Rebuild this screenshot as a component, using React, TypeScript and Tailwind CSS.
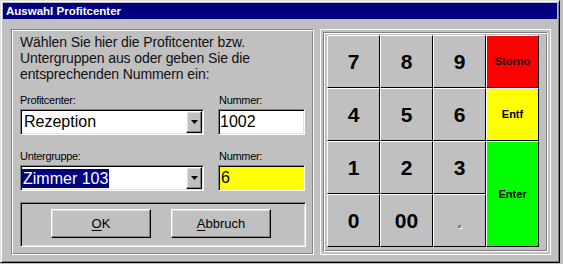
import React from "react";

const raisedKey =
  "border border-t-white border-l-white border-r-black border-b-black";
const sunken =
  "border border-t-[#808080] border-l-[#808080] border-b-white border-r-white shadow-[inset_1px_1px_0_#000000,inset_-1px_-1px_0_#dfdfdf]";
const etched =
  "border border-t-[#808080] border-l-[#808080] border-b-white border-r-white shadow-[inset_1px_1px_0_#ffffff,inset_-1px_-1px_0_#808080]";
const winButton =
  "border border-t-white border-l-white border-r-black border-b-black shadow-[inset_-1px_-1px_0_#808080,inset_1px_1px_0_#dfdfdf]";

function DropButton() {
  return (
    <div className={`w-[16px] h-full bg-[#c0c0c0] flex items-center justify-center ${winButton}`}>
      <svg width="7" height="4" viewBox="0 0 7 4">
        <polygon points="0,0 7,0 3.5,4" fill="#000" />
      </svg>
    </div>
  );
}

function Key({
  children,
  className = "",
  small = false,
}: {
  children?: React.ReactNode;
  className?: string;
  small?: boolean;
}) {
  return (
    <div
      className={`flex items-center justify-center font-bold ${small ? "text-[11px]" : "text-[21px]"} ${raisedKey} ${className}`}
    >
      {children}
    </div>
  );
}

export default function App() {
  return (
    <div className="w-[563px] h-[264px] bg-[#c0c0c0] font-['Liberation_Sans',Arial,sans-serif] text-black overflow-hidden">
      <div className="w-[560px] h-[263px] border border-t-[#dfdfdf] border-l-[#dfdfdf] border-r-black border-b-black shadow-[inset_1px_1px_0_#ffffff,inset_-1px_-1px_0_#808080] p-[2px] flex flex-col">
        <div className="h-[16px] bg-[#000080] text-white font-bold text-[11.5px] leading-[16px] pl-[3px] shrink-0">
          Auswahl Profitcenter
        </div>
        <div className="flex mt-[10px] ml-[8px] gap-[6px]">
          {/* Left panel */}
          <div className={`w-[303px] h-[226px] ${etched} pl-[8px] pt-[4px]`}>
            <p className="text-[14px] leading-[16px] tracking-[-0.1px] text-[#111]">
              Wählen Sie hier die Profitcenter bzw.
              <br />
              Untergruppen aus oder geben Sie die
              <br />
              entsprechenden Nummern ein:
            </p>

            <div className="flex mt-[11px]">
              <div className="w-[184px]">
                <div className="h-[14px] text-[11px] leading-[14px] tracking-[-0.3px]">Profitcenter:</div>
                <div className={`mt-[2px] h-[26px] bg-white flex items-stretch p-[1px] ${sunken}`}>
                  <div className="flex-1 flex items-center pl-[2px] text-[16px] leading-[20px]">Rezeption</div>
                  <DropButton />
                </div>
              </div>
              <div className="w-[87px] ml-[14px]">
                <div className="h-[14px] text-[11px] leading-[14px] tracking-[-0.3px] pl-[1px]">Nummer:</div>
                <div className={`mt-[2px] h-[26px] bg-white flex items-center pl-[1px] text-[16px] ${sunken}`}>
                  1002
                </div>
              </div>
            </div>

            <div className="flex mt-[14px]">
              <div className="w-[184px]">
                <div className="h-[14px] text-[11px] leading-[14px] tracking-[-0.3px]">Untergruppe:</div>
                <div className={`mt-[2px] h-[26px] bg-white flex items-stretch p-[1px] ${sunken}`}>
                  <div className="flex-1 flex items-center text-[16px]">
                    <span className="bg-[#000080] text-white px-[1px] leading-[19px]">Zimmer 103</span>
                  </div>
                  <DropButton />
                </div>
              </div>
              <div className="w-[87px] ml-[14px]">
                <div className="h-[14px] text-[11px] leading-[14px] tracking-[-0.3px] pl-[1px]">Nummer:</div>
                <div className={`mt-[2px] h-[26px] bg-[#ffff00] flex items-center pl-[2px] text-[16px] ${sunken}`}>
                  6
                </div>
              </div>
            </div>

            <div className={`mt-[11px] w-[286px] h-[45px] ${sunken} pl-[30px] pt-[6px] flex gap-[20px]`}>
              <button className={`w-[100px] h-[29px] bg-[#c0c0c0] text-[13px] ${winButton}`}>
                <span className="underline underline-offset-2">O</span>K
              </button>
              <button className={`w-[100px] h-[29px] bg-[#c0c0c0] text-[13px] ${winButton}`}>
                <span className="underline underline-offset-2">A</span>bbruch
              </button>
            </div>
          </div>

          {/* Right panel */}
          <div className="w-[231px] h-[226px] border border-white p-[2px]">
            <div className={`w-full h-full ${etched} pl-[3px] pt-[2px]`}>
              <div className="grid grid-cols-[53px_53px_53px_53px] grid-rows-[53px_53px_53px_53px] w-[212px]">
                <Key>7</Key>
                <Key>8</Key>
                <Key>9</Key>
                <Key small className="bg-[#ff0000] text-[#200000]">Storno</Key>
                <Key>4</Key>
                <Key>5</Key>
                <Key>6</Key>
                <Key small className="bg-[#ffff00]">Entf</Key>
                <Key>1</Key>
                <Key>2</Key>
                <Key>3</Key>
                <Key small className="bg-[#00ff00] row-span-2">Enter</Key>
                <Key>0</Key>
                <Key>00</Key>
                <Key className="text-[#808080] [text-shadow:1px_1px_0_#ffffff]">.</Key>
              </div>
            </div>
          </div>
        </div>
      </div>
    </div>
  );
}
